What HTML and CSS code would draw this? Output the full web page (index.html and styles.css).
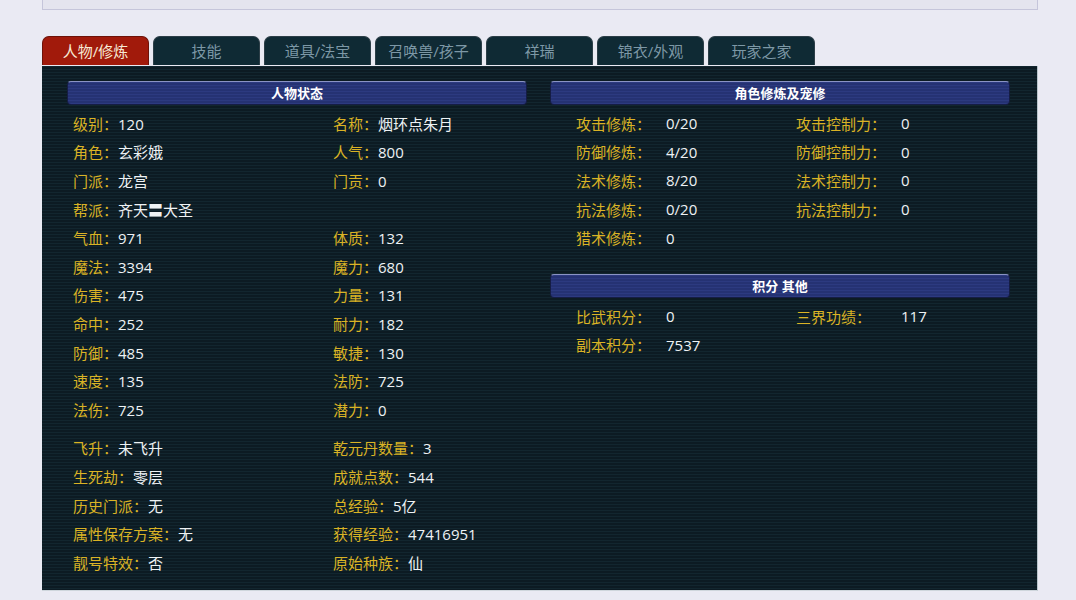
FILE: index.html
```html
<!DOCTYPE html>
<html lang="zh-CN">
<head>
  <meta charset="UTF-8" />
  <meta name="viewport" content="width=device-width, initial-scale=1.0"/>
  <title>角色详情</title>
  <link rel="stylesheet" href="styles.css">
</head>
<body>
  <div class="wrap">
    <div class="topbox"></div>

    <ul class="tabs">
      <li class="tab active">人物/修炼</li>
      <li class="tab">技能</li>
      <li class="tab">道具/法宝</li>
      <li class="tab">召唤兽/孩子</li>
      <li class="tab">祥瑞</li>
      <li class="tab">锦衣/外观</li>
      <li class="tab">玩家之家</li>
    </ul>

    <div class="panel">
      <div class="col">
        <div class="head">人物状态</div>
        <div class="stats">
          <div><b>级别：</b>120</div><div><b>名称：</b>烟环点朱月</div>
          <div><b>角色：</b>玄彩娥</div><div><b>人气：</b>800</div>
          <div><b>门派：</b>龙宫</div><div><b>门贡：</b>0</div>
          <div><b>帮派：</b>齐天〓大圣</div><div></div>
          <div><b>气血：</b>971</div><div><b>体质：</b>132</div>
          <div><b>魔法：</b>3394</div><div><b>魔力：</b>680</div>
          <div><b>伤害：</b>475</div><div><b>力量：</b>131</div>
          <div><b>命中：</b>252</div><div><b>耐力：</b>182</div>
          <div><b>防御：</b>485</div><div><b>敏捷：</b>130</div>
          <div><b>速度：</b>135</div><div><b>法防：</b>725</div>
          <div><b>法伤：</b>725</div><div><b>潜力：</b>0</div>
        </div>
        <div class="stats more">
          <div><b>飞升：</b>未飞升</div><div><b>乾元丹数量：</b>3</div>
          <div><b>生死劫：</b>零层</div><div><b>成就点数：</b>544</div>
          <div><b>历史门派：</b>无</div><div><b>总经验：</b>5亿</div>
          <div><b>属性保存方案：</b>无</div><div><b>获得经验：</b>47416951</div>
          <div><b>靓号特效：</b>否</div><div><b>原始种族：</b>仙</div>
        </div>
      </div>

      <div class="col">
        <div class="head">角色修炼及宠修</div>
        <div class="table">
          <b>攻击修炼：</b><span>0/20</span><b>攻击控制力：</b><span>0</span>
          <b>防御修炼：</b><span>4/20</span><b>防御控制力：</b><span>0</span>
          <b>法术修炼：</b><span>8/20</span><b>法术控制力：</b><span>0</span>
          <b>抗法修炼：</b><span>0/20</span><b>抗法控制力：</b><span>0</span>
          <b>猎术修炼：</b><span>0</span>
        </div>

        <div class="head second">积分 其他</div>
        <div class="table">
          <b>比武积分：</b><span>0</span><b>三界功绩：</b><span>117</span>
          <b>副本积分：</b><span>7537</span>
        </div>
      </div>
    </div>
  </div>
</body>
</html>
```

FILE: styles.css
```css
body {
  margin: 0;
  background-color: #eaeaf3;
  font-family: "Open Sans", "Noto Sans CJK SC", sans-serif;
  font-size: 15px;
}
.wrap {
  margin-left: 42px;
  width: 996px;
}
.topbox {
  height: 9px;
  background: #e4e4ee;
  border: 1px solid #c5c5da;
  border-top: 0;
}

/* tabs */
.tabs {
  list-style: none;
  margin: 26px 0 1px;
  padding: 0;
  display: flex;
  gap: 4px;
}
.tab {
  width: 105px;
  height: 28px;
  line-height: 28px;
  text-align: center;
  color: #7d98a6;
  background: #0f2a34;
  border: 1px solid #2c3e47;
  border-bottom: 0;
  border-radius: 7px 7px 0 0;
}
.tab.active {
  color: #f6ead6;
  background: #a11a0b;
  border-color: #6e1208;
}

/* main panel with scan lines */
.panel {
  height: 509px;
  padding: 15px 28px 0 25px;
  display: grid;
  grid-template-columns: 460px 460px;
  gap: 23px;
  background: repeating-linear-gradient(#12262f 0 1px, #0c1b23 1px 3px);
  border-right: 1px solid #b9c5cc;
  border-bottom: 1px solid #cfd6dc;
}
.head {
  height: 22px;
  line-height: 22px;
  text-align: center;
  color: #fff;
  font-size: 13px;
  font-weight: bold;
  background: repeating-linear-gradient(#2c3a80 0 1px, #253273 1px 3px);
  border: 1px solid #151d44;
  border-top-color: #8a93c4;
  border-radius: 4px;
}
.head.second {
  margin-top: 22px;
}

b {
  font-weight: normal;
  color: #dab325;
}

.stats {
  margin-top: 4px;
  padding-left: 6px;
  display: grid;
  grid-template-columns: 260px 1fr;
  grid-auto-rows: 28.6px;
  align-items: center;
  color: #eef2f4;
}
.stats.more {
  margin-top: 10px;
}

.table {
  margin-top: 4px;
  padding-left: 26px;
  display: grid;
  grid-template-columns: 90px 130px 105px 1fr;
  grid-auto-rows: 28.6px;
  align-items: center;
  color: #eef2f4;
}
```
